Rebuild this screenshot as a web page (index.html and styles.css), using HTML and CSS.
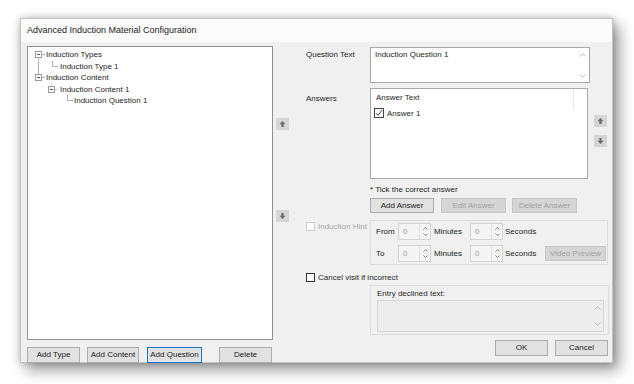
FILE: index.html
```html
<!DOCTYPE html>
<html>
<head>
<meta charset="utf-8">
<title>Advanced Induction Material Configuration</title>
<link rel="stylesheet" href="styles.css">
</head>
<body>
<div class="window">
  <div class="titlebar">Advanced Induction Material Configuration</div>
  <div class="content">
    <div class="left">
      <div class="tree">
        <div class="node">
          <svg class="pre" width="18" height="11.5" viewBox="0 0 18 11.5"><rect x="7.5" y="2.5" width="6" height="6" fill="#fff" stroke="#9a9a9a"/><path d="M9 5.5h3" stroke="#555"/><path d="M13.5 5.5H17M10.5 8.5V11.5" stroke="#b0b0b0" fill="none"/></svg>
          <span>Induction Types</span>
        </div>
        <div class="node">
          <svg class="pre" width="32" height="11.5" viewBox="0 0 32 11.5"><path d="M10.5 0V11.5M24.5 0V5.5H30" stroke="#b0b0b0" fill="none"/></svg>
          <span>Induction Type 1</span>
        </div>
        <div class="node">
          <svg class="pre" width="18" height="11.5" viewBox="0 0 18 11.5"><path d="M10.5 0V2.5M13.5 5.5H17" stroke="#b0b0b0" fill="none"/><rect x="7.5" y="2.5" width="6" height="6" fill="#fff" stroke="#9a9a9a"/><path d="M9 5.5h3" stroke="#555"/></svg>
          <span>Induction Content</span>
        </div>
        <div class="node">
          <svg class="pre" width="32" height="11.5" viewBox="0 0 32 11.5"><path d="M23.5 0V2.5M26.5 5.5H30" stroke="#b0b0b0" stroke-dasharray="1 1" fill="none"/><rect x="20.5" y="2.5" width="6" height="6" fill="#fff" stroke="#9a9a9a"/><path d="M22 5.5h3" stroke="#555"/></svg>
          <span>Induction Content 1</span>
        </div>
        <div class="node">
          <svg class="pre" width="46" height="11.5" viewBox="0 0 46 11.5"><path d="M39.5 0V5.5H45" stroke="#b0b0b0" fill="none"/></svg>
          <span>Induction Question 1</span>
        </div>
      </div>
      <div class="leftbtns">
        <button class="btn w-type">Add Type</button>
        <button class="btn w-content">Add Content</button>
        <button class="btn w-question focused">Add Question</button>
        <button class="btn w-delete">Delete</button>
      </div>
    </div>

    <div class="mid">
      <button class="arrow">
        <svg width="13" height="12" viewBox="0 0 13 12"><path d="M6.5 3L9.5 6.3H7.6V9H5.4V6.3H3.5Z" fill="#6a6a6a"/></svg>
      </button>
      <button class="arrow arrow-down-mid">
        <svg width="13" height="12" viewBox="0 0 13 12"><path d="M6.5 9L9.5 5.7H7.6V3H5.4V5.7H3.5Z" fill="#6a6a6a"/></svg>
      </button>
    </div>

    <div class="right">
      <div class="row r-question">
        <div class="lbl">Question Text</div>
        <div class="textbox qbox">
          <div class="tbtext">Induction Question 1</div>
          <div class="vscroll">
            <svg width="7" height="4" viewBox="0 0 7 4"><path d="M0.5 3.5L3.5 0.7L6.5 3.5" stroke="#b8b8b8" fill="none"/></svg>
            <svg width="7" height="4" viewBox="0 0 7 4"><path d="M0.5 0.5L3.5 3.3L6.5 0.5" stroke="#b8b8b8" fill="none"/></svg>
          </div>
        </div>
      </div>

      <div class="row r-answers">
        <div class="lbl lbl-answers">Answers</div>
        <div class="listbox">
          <div class="lv-header"><span class="lv-col">Answer Text</span><span class="colsep"></span></div>
          <div class="lv-item">
            <span class="cb">
              <svg width="8" height="8" viewBox="0 0 8 8"><path d="M1 4.2L3 6.3L7 1.2" stroke="#333" stroke-width="1" fill="none"/></svg>
            </span>
            <span>Answer 1</span>
          </div>
        </div>
        <div class="sidearrows">
          <button class="arrow">
            <svg width="13" height="12" viewBox="0 0 13 12"><path d="M6.5 3L9.5 6.3H7.6V9H5.4V6.3H3.5Z" fill="#6a6a6a"/></svg>
          </button>
          <button class="arrow arrow-down-side">
            <svg width="13" height="12" viewBox="0 0 13 12"><path d="M6.5 9L9.5 5.7H7.6V3H5.4V5.7H3.5Z" fill="#6a6a6a"/></svg>
          </button>
        </div>
      </div>

      <div class="tick">* Tick the correct answer</div>

      <div class="ansbtns">
        <button class="btn w-add">Add Answer</button>
        <button class="btn w-edit" disabled>Edit Answer</button>
        <button class="btn w-del" disabled>Delete Answer</button>
      </div>

      <div class="row r-hint">
        <div class="lbl hintlbl"><span class="cb cb-disabled"></span><span>Induction Hint</span></div>
        <div class="group hintgroup">
          <div class="trow">
            <span class="tl">From</span>
            <div class="spin"><span class="spinval">0</span><span class="spinbtns"><svg width="5" height="3" viewBox="0 0 5 3"><path d="M0.5 2.5L2.5 0.5L4.5 2.5" stroke="#8a8a8a" fill="none"/></svg><svg width="5" height="3" viewBox="0 0 5 3"><path d="M0.5 0.5L2.5 2.5L4.5 0.5" stroke="#8a8a8a" fill="none"/></svg></span></div>
            <span class="unit">Minutes</span>
            <div class="spin"><span class="spinval">0</span><span class="spinbtns"><svg width="5" height="3" viewBox="0 0 5 3"><path d="M0.5 2.5L2.5 0.5L4.5 2.5" stroke="#8a8a8a" fill="none"/></svg><svg width="5" height="3" viewBox="0 0 5 3"><path d="M0.5 0.5L2.5 2.5L4.5 0.5" stroke="#8a8a8a" fill="none"/></svg></span></div>
            <span class="unit2">Seconds</span>
          </div>
          <div class="trow trow2">
            <span class="tl">To</span>
            <div class="spin"><span class="spinval">0</span><span class="spinbtns"><svg width="5" height="3" viewBox="0 0 5 3"><path d="M0.5 2.5L2.5 0.5L4.5 2.5" stroke="#8a8a8a" fill="none"/></svg><svg width="5" height="3" viewBox="0 0 5 3"><path d="M0.5 0.5L2.5 2.5L4.5 0.5" stroke="#8a8a8a" fill="none"/></svg></span></div>
            <span class="unit">Minutes</span>
            <div class="spin"><span class="spinval">0</span><span class="spinbtns"><svg width="5" height="3" viewBox="0 0 5 3"><path d="M0.5 2.5L2.5 0.5L4.5 2.5" stroke="#8a8a8a" fill="none"/></svg><svg width="5" height="3" viewBox="0 0 5 3"><path d="M0.5 0.5L2.5 2.5L4.5 0.5" stroke="#8a8a8a" fill="none"/></svg></span></div>
            <span class="unit2">Seconds</span>
            <button class="btn w-video" disabled>Video Preview</button>
          </div>
        </div>
      </div>

      <div class="cancelrow"><span class="cb cb-dark"></span><span>Cancel visit if incorrect</span></div>

      <div class="group entrygroup">
        <div class="entrylbl">Entry declined text:</div>
        <div class="textarea">
          <div class="vscroll vscroll-ta">
            <svg width="7" height="4" viewBox="0 0 7 4"><path d="M0.5 3.5L3.5 0.7L6.5 3.5" stroke="#b8b8b8" fill="none"/></svg>
            <svg width="7" height="4" viewBox="0 0 7 4"><path d="M0.5 0.5L3.5 3.3L6.5 0.5" stroke="#b8b8b8" fill="none"/></svg>
          </div>
        </div>
      </div>

      <div class="okrow">
        <button class="btn w-ok">OK</button>
        <button class="btn w-cancel">Cancel</button>
      </div>
    </div>
  </div>
</div>
</body>
</html>
```

FILE: styles.css
```css
* { box-sizing: border-box; }

html, body {
  margin: 0;
  padding: 0;
  background: #ffffff;
  overflow: hidden;
}

body {
  font-family: "Liberation Sans", Arial, sans-serif;
  font-size: 8px;
  color: #1e1e1e;
  width: 634px;
  height: 384px;
  padding: 18px 0 0 20px;
}

.window {
  width: 593px;
  height: 345px;
  background: #f0f0f0;
  display: flex;
  flex-direction: column;
  border: 1px solid #c4c4c4;
  box-shadow: 0 0 7px rgba(0, 0, 0, 0.22), 6px 7px 14px rgba(0, 0, 0, 0.4);
}

.titlebar {
  height: 23px;
  line-height: 23px;
  padding-left: 6px;
  font-size: 9px;
  color: #222;
  background: #fbfbfb;
  flex-shrink: 0;
}

.content {
  flex: 1;
  display: flex;
  padding: 4px 3px 0 6px;
}

/* left column */
.left {
  width: 246px;
  display: flex;
  flex-direction: column;
}

.tree {
  height: 294px;
  border: 1px solid #8f8f8f;
  background: #ffffff;
  padding-top: 2px;
}

.node {
  display: flex;
  align-items: center;
  height: 11.5px;
  line-height: 11.5px;
  white-space: nowrap;
}

.pre {
  display: block;
  flex-shrink: 0;
}

.leftbtns {
  margin-top: 7px;
  display: flex;
}

.btn {
  font-family: inherit;
  font-size: 8px;
  color: #1a1a1a;
  height: 16px;
  padding: 0;
  margin: 0;
  background: #e1e1e1;
  border: 1px solid #adadad;
  border-radius: 0;
  text-align: center;
  line-height: 14px;
  white-space: nowrap;
}

.btn:disabled {
  background: #d5d5d5;
  border-color: #c6c6c6;
  color: #a3a3a3;
}

.w-type { width: 53px; }
.w-content { width: 52px; margin-left: 7px; }
.w-question { width: 55px; margin-left: 8px; }
.w-delete { width: 53px; margin-left: 17px; }

.focused {
  border-color: #1c6fc4;
  box-shadow: inset 0 0 0 1px #dfe9f4;
}

/* middle arrows */
.mid {
  width: 13px;
  margin-left: 3px;
  padding-top: 72px;
  display: flex;
  flex-direction: column;
}

.arrow {
  width: 13px;
  height: 12px;
  padding: 0;
  margin: 0;
  border: none;
  background: #d5d5d5;
  display: block;
}

.arrow svg { display: block; }

.arrow-down-mid { margin-top: 80px; }

/* right column */
.right {
  margin-left: 17px;
  width: 303px;
  display: flex;
  flex-direction: column;
}

.row {
  display: flex;
}

.lbl {
  width: 64px;
  flex-shrink: 0;
  line-height: 11px;
}

.r-question {
  margin-top: 1px;
}

.r-question .lbl { padding-top: 1.5px; }

.textbox {
  background: #ffffff;
  border: 1px solid #a8a8a8;
}

.qbox {
  width: 220px;
  height: 36px;
  display: flex;
}

.tbtext {
  flex: 1;
  padding: 0.5px 0 0 4px;
  line-height: 11px;
}

.vscroll {
  width: 13px;
  display: flex;
  flex-direction: column;
  justify-content: space-between;
  align-items: center;
  padding: 5px 0 4px;
}

.vscroll svg { display: block; }

.r-answers { margin-top: 5px; }

.lbl-answers { padding-top: 4.5px; }

.listbox {
  width: 218px;
  height: 91px;
  background: #ffffff;
  border: 1px solid #a8a8a8;
}

.lv-header {
  height: 17px;
  display: flex;
  align-items: center;
  padding-left: 5px;
}

.lv-col { flex: 1; }

.colsep {
  width: 1px;
  height: 20px;
  align-self: flex-start;
  background: #e8e8e8;
  margin-right: 13px;
}

.lv-item {
  height: 14px;
  display: flex;
  align-items: center;
  padding-left: 3px;
}

.cb {
  width: 10px;
  height: 10px;
  border: 1px solid #444;
  background: #fff;
  margin-right: 3px;
  display: flex;
  align-items: center;
  justify-content: center;
  flex-shrink: 0;
}

.cb svg { display: block; }

.sidearrows {
  margin-left: 6px;
  padding-top: 27px;
  display: flex;
  flex-direction: column;
}

.arrow-down-side { margin-top: 8px; }

.tick {
  margin-top: 5px;
  padding-left: 64px;
  line-height: 11px;
}

.ansbtns {
  margin-top: 3px;
  padding-left: 64px;
  display: flex;
}

.ansbtns .btn { height: 15px; line-height: 13px; }

.w-add { width: 64px; }
.w-edit { width: 65px; margin-left: 7px; }
.w-del { width: 65px; margin-left: 6px; }

.r-hint { margin-top: 7px; }

.hintlbl {
  display: flex;
  align-items: center;
  height: 11px;
  margin-top: 0.5px;
  color: #a8a8a8;
}

.cb-disabled {
  width: 9px;
  height: 9px;
  border-color: #cfcfcf;
}

.group {
  border: 1px solid #dcdcdc;
}

.hintgroup {
  width: 238px;
  height: 45px;
  padding: 2px 0 0 5px;
}

.trow {
  display: flex;
  align-items: center;
  height: 17px;
}

.trow2 { margin-top: 5px; }

.tl { width: 22px; }

.spin {
  width: 33px;
  height: 17px;
  border: 1px solid #d4d4d4;
  background: #f4f4f4;
  display: flex;
}

.spinval {
  flex: 1;
  padding-left: 4px;
  line-height: 15px;
  color: #a0a0a0;
}

.spinbtns {
  width: 11px;
  border-left: 1px solid #e2e2e2;
  display: flex;
  flex-direction: column;
  justify-content: space-between;
  align-items: center;
  padding: 3px 0 3px;
}

.spinbtns svg { display: block; }

.unit { width: 39px; padding-left: 3px; }
.unit2 { padding-left: 2px; }

.w-video {
  width: 61px;
  height: 15px;
  line-height: 13px;
  margin-left: auto;
  margin-right: 1px;
}

.cancelrow {
  margin-top: 7px;
  height: 11px;
  display: flex;
  align-items: center;
}

.cb-dark {
  width: 9px;
  height: 9px;
  border-color: #333;
}

.entrygroup {
  margin-top: 2px;
  margin-left: 64px;
  width: 239px;
  height: 50px;
  padding: 2px 0 0 6px;
}

.entrylbl {
  line-height: 11px;
}

.textarea {
  margin-top: 1px;
  width: 227px;
  height: 32px;
  border: 1px solid #d6d6d6;
  background: #ededed;
  display: flex;
  justify-content: flex-end;
}

.vscroll-ta {
  width: 12px;
  padding: 5px 0 5px;
}

.okrow {
  margin-top: 5px;
  display: flex;
  justify-content: flex-end;
  padding-right: 1px;
}

.w-ok { width: 53px; }
.w-cancel { width: 53px; margin-left: 7px; }
```
